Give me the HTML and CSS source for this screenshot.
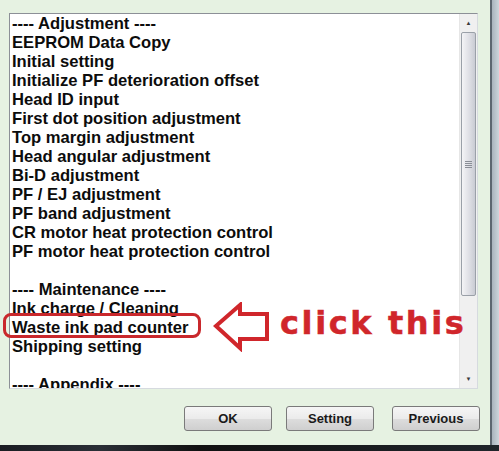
FILE: index.html
```html
<!DOCTYPE html>
<html lang="en">
<head>
  <meta charset="UTF-8">
  <title>Adjustment program</title>
  <link rel="stylesheet" href="styles.css">
</head>
<body>
  <div class="screen">
    <div class="window">
      <div class="listbox">
        <ul class="items">
          <li>---- Adjustment ----</li>
          <li>EEPROM Data Copy</li>
          <li>Initial setting</li>
          <li>Initialize PF deterioration offset</li>
          <li>Head ID input</li>
          <li>First dot position adjustment</li>
          <li>Top margin adjustment</li>
          <li>Head angular adjustment</li>
          <li>Bi-D adjustment</li>
          <li>PF / EJ adjustment</li>
          <li>PF band adjustment</li>
          <li>CR motor heat protection control</li>
          <li>PF motor heat protection control</li>
          <li class="blank"></li>
          <li>---- Maintenance ----</li>
          <li>Ink charge / Cleaning</li>
          <li>Waste ink pad counter</li>
          <li>Shipping setting</li>
          <li class="blank"></li>
          <li>---- Appendix ----</li>
        </ul>
        <div class="scrollbar">
          <div class="sb-btn up">&#9650;</div>
          <div class="sb-thumb"><span class="grip"></span></div>
          <div class="sb-track"></div>
          <div class="sb-btn down">&#9660;</div>
        </div>
      </div>
      <div class="buttons">
        <button class="btn ok">OK</button>
        <button class="btn">Setting</button>
        <button class="btn">Previous</button>
      </div>

      <div class="mark-ring"></div>
      <svg class="mark-arrow" width="58" height="50" viewBox="0 0 58 50">
        <path d="M3 24 L27 3 L27 12 L54 12 L54 37 L27 37 L27 46 Z" fill="none" stroke="#d0262b" stroke-width="4" stroke-linejoin="miter"/>
      </svg>
      <div class="mark-text">click this</div>
    </div>
    <div class="frame-right"></div>
  </div>
  <div class="taskbar"></div>
</body>
</html>
```

FILE: styles.css
```css
body {
  margin: 0;
  width: 499px;
  height: 451px;
  overflow: hidden;
  background: #e6f2e2;
  font-family: 'Liberation Sans', Arial, sans-serif;
}
.screen {
  display: flex;
  height: 445px;
}
.window {
  position: relative;
  width: 490px;
  padding: 13px 0 0 9px;
  box-sizing: border-box;
}
.frame-right {
  width: 9px;
  border-left: 2px solid #5d6670;
  background: linear-gradient(to right, #a9b3bd, #cdd5dc);
  box-sizing: border-box;
}
.taskbar {
  height: 6px;
  background: linear-gradient(to right, #1a1d22 0%, #2a2f36 20%, #111 40%, #20252b 100%);
}
.listbox {
  display: flex;
  width: 469px;
  height: 376px;
  background: #fff;
  border: 1px solid #8c9097;
  border-right-color: #d6dadf;
  border-bottom-color: #d6dadf;
  box-sizing: border-box;
  overflow: hidden;
}
.items {
  flex: 1;
  list-style: none;
  margin: 0;
  padding: 0 0 0 2px;
  font-size: 16.6px;
  font-weight: bold;
  line-height: 19px;
  color: #0c0c0c;
  white-space: nowrap;
}
.items .blank {
  height: 19px;
}
.scrollbar {
  width: 17px;
  display: flex;
  flex-direction: column;
  background: #f0f0f0;
  border-left: 1px solid #e6e6e6;
}
.sb-btn {
  height: 18px;
  font-size: 6px;
  line-height: 18px;
  text-align: center;
  color: #3a3a3a;
}
.sb-thumb {
  height: 264px;
  margin: 0 1px;
  border: 1px solid #9aa0a8;
  border-radius: 2px;
  background: linear-gradient(to right, #f4f4f6, #dcdde3 60%, #c9cbd3);
  box-sizing: border-box;
  display: flex;
  justify-content: center;
  align-items: center;
}
.grip {
  width: 7px;
  height: 7px;
  background: repeating-linear-gradient(to bottom, #8a8e96 0 1px, transparent 1px 2px);
}
.sb-track {
  flex: 1;
}
.buttons {
  display: flex;
  gap: 18px;
  justify-content: flex-end;
  margin: 17px 10px 0 0;
}
.btn {
  width: 88px;
  height: 25px;
  border: 1px solid #7a7a7a;
  border-radius: 3px;
  background: linear-gradient(to bottom, #f6f6f6 0%, #ebebeb 50%, #dddddd 51%, #cfcfcf 100%);
  font-family: 'Liberation Sans', Arial, sans-serif;
  font-size: 13px;
  font-weight: bold;
  color: #1a1a1a;
  padding: 0;
}
.btn.ok {
  margin-right: -4px;
}
.mark-ring {
  position: absolute;
  left: 3px;
  top: 313px;
  width: 198px;
  height: 25px;
  border: 3px solid #c9282c;
  border-radius: 8px;
  box-sizing: border-box;
}
.mark-arrow {
  position: absolute;
  left: 213px;
  top: 302px;
}
.mark-text {
  position: absolute;
  left: 280px;
  top: 303px;
  font-family: 'DejaVu Sans', sans-serif;
  font-size: 32px;
  font-weight: bold;
  letter-spacing: 2.6px;
  -webkit-text-stroke: 0.5px #d0262b;
  color: #d0262b;
  line-height: 40px;
}
```
